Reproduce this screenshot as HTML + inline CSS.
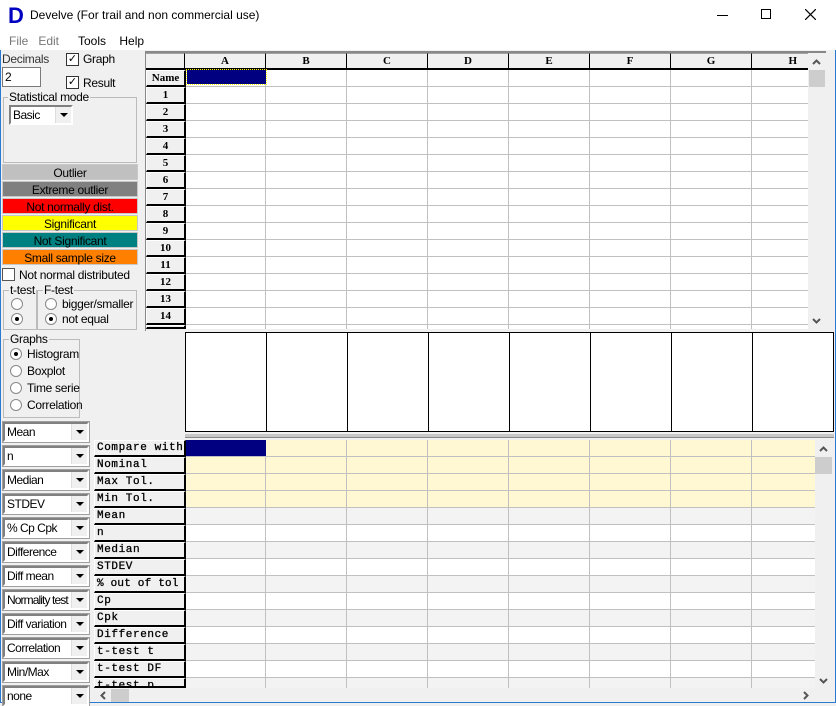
<!DOCTYPE html>
<html><head><meta charset="utf-8">
<style>
*{box-sizing:border-box;margin:0;padding:0}
body{width:836px;height:703px;overflow:hidden;background:#f0f0f0;font-family:"Liberation Sans",sans-serif;font-size:12px;color:#000;position:relative}
.a{position:absolute}
.win{left:0;top:0;width:836px;height:703px;border:1px solid #2b79d0;border-top:none}
.title{left:0;top:0;width:836px;height:32px;background:#fff}
.menu{left:0;top:32px;width:836px;height:18px;background:#fff}
.hdr{background:#f0f0f0;border-right:1px solid #000;border-bottom:2px solid #000;text-align:center;font-family:"Liberation Serif",serif;font-weight:bold;font-size:11px;line-height:15px;height:17px;border-top:1px solid #a0a0a0}
.rh{background:#f0f0f0;border-right:2px solid #000;border-bottom:2px solid #000;border-left:1px solid #fff;border-top:1px solid #fff;text-align:center;font-family:"Liberation Serif",serif;font-weight:bold;font-size:11px;line-height:15px;height:17px}
.brh{text-align:left;padding-left:2px;font-family:"Liberation Mono",monospace;font-weight:normal;letter-spacing:0.6px;line-height:14px;font-size:11px;-webkit-text-stroke:0.3px #000}
.leg{left:2px;width:136px;height:16px;text-align:center;line-height:16px;font-size:12px;border:1px solid #c8c8c8;letter-spacing:-0.3px}
.dd{left:3px;width:86px;height:20px;border:2px solid;border-color:#808080 #fff #fff #808080;background:#fff;font-size:12px;line-height:16px;padding-left:2px;outline:1px solid #a0a0a0;letter-spacing:-0.5px;white-space:nowrap;overflow:hidden}
.dd i{position:absolute;right:0;top:0;width:16px;height:16px;background:#f0f0f0;border-left:1px solid #ddd}
.dd i:after{content:"";position:absolute;left:4px;top:6px;border:4px solid transparent;border-top:4px solid #000;border-bottom:none}
.rb{width:12px;height:12px;border-radius:50%;border:1px solid #888;background:#fff}
.rb.on:after{content:"";position:absolute;left:3px;top:3px;width:4px;height:4px;border-radius:50%;background:#000}
.cb{width:13px;height:13px;border:1px solid #333;background:#fff}
.grp{border:1px solid #bbb}
.lbl{background:#f0f0f0;padding:0 1px;line-height:12px;letter-spacing:-0.3px}
.t{letter-spacing:-0.3px}
</style></head><body>
<div class="a win"></div>
<div class="a title"></div>
<div class="a" style="left:8px;top:6px;width:18px;height:20px;font:bold 22px 'Liberation Sans',sans-serif;color:#0000c0;line-height:20px">D</div>
<div class="a" style="left:30px;top:8px;font-size:12px">Develve (For trail and non commercial use)</div>
<div class="a" style="left:717px;top:15px;width:11px;height:1px;background:#000"></div>
<div class="a" style="left:761px;top:9px;width:10px;height:10px;border:1px solid #000"></div>
<svg class="a" style="left:805px;top:9px" width="11" height="11"><path d="M0 0L11 11M11 0L0 11" stroke="#000" stroke-width="1.2"/></svg>
<div class="a menu"></div>
<div class="a" style="left:9px;top:34px;color:#777">File&nbsp;&nbsp; Edit</div>
<div class="a" style="left:78px;top:34px">Tools&nbsp;&nbsp;&nbsp; Help</div>

<div class="a t" style="left:2px;top:52px;color:#333">Decimals</div>
<div class="a" style="left:2px;top:67px;width:39px;height:20px;background:#fff;border:1px solid #7a7a7a;padding-left:2px;line-height:18px">2</div>
<div class="a cb" style="left:66px;top:53px;font-size:11px;line-height:11px;text-align:center">✓</div>
<div class="a t" style="left:83px;top:52px">Graph</div>
<div class="a cb" style="left:66px;top:76px;font-size:11px;line-height:11px;text-align:center">✓</div>
<div class="a t" style="left:83px;top:76px">Result</div>
<div class="a grp" style="left:3px;top:97px;width:134px;height:66px"></div>
<div class="a lbl" style="left:8px;top:91px">Statistical mode</div>
<div class="a dd" style="left:9px;top:105px;width:64px;outline:none">Basic<i></i></div>

<div class="a leg" style="top:164px;background:#c0c0c0">Outlier</div>
<div class="a leg" style="top:181px;background:#808080">Extreme outlier</div>
<div class="a leg" style="top:198px;background:#ff0000">Not normally dist.</div>
<div class="a leg" style="top:215px;background:#ffff00">Significant</div>
<div class="a leg" style="top:232px;background:#008080">Not Significant</div>
<div class="a leg" style="top:249px;background:#ff8000">Small sample size</div>

<div class="a cb" style="left:2px;top:268px;border-color:#555"></div>
<div class="a t" style="left:19px;top:268px">Not normal distributed</div>
<div class="a grp" style="left:3px;top:290px;width:34px;height:40px"></div>
<div class="a grp" style="left:37px;top:290px;width:100px;height:40px"></div>
<div class="a lbl" style="left:9px;top:284px">t-test</div>
<div class="a lbl" style="left:43px;top:284px">F-test</div>
<div class="a rb" style="left:11px;top:298px"></div>
<div class="a rb on" style="left:11px;top:313px"></div>
<div class="a rb" style="left:45px;top:298px"></div>
<div class="a rb on" style="left:45px;top:313px"></div>
<div class="a t" style="left:62px;top:297px">bigger/smaller</div>
<div class="a t" style="left:62px;top:312px">not equal</div>

<div class="a grp" style="left:3px;top:339px;width:77px;height:79px"></div>
<div class="a lbl" style="left:9px;top:333px">Graphs</div>
<div class="a rb on" style="left:10px;top:348px"></div><div class="a t" style="left:27px;top:347px">Histogram</div>
<div class="a rb" style="left:10px;top:365px"></div><div class="a t" style="left:27px;top:364px">Boxplot</div>
<div class="a rb" style="left:10px;top:382px"></div><div class="a t" style="left:27px;top:381px">Time serie</div>
<div class="a rb" style="left:10px;top:399px"></div><div class="a t" style="left:27px;top:398px">Correlation</div>

<div class="a dd" style="top:422px">Mean<i></i></div>
<div class="a dd" style="top:446px">n<i></i></div>
<div class="a dd" style="top:470px">Median<i></i></div>
<div class="a dd" style="top:494px">STDEV<i></i></div>
<div class="a dd" style="top:518px">% Cp Cpk<i></i></div>
<div class="a dd" style="top:542px">Difference<i></i></div>
<div class="a dd" style="top:566px">Diff mean<i></i></div>
<div class="a dd" style="top:590px;letter-spacing:-0.9px">Normality test<i></i></div>
<div class="a dd" style="top:614px">Diff variation<i></i></div>
<div class="a dd" style="top:638px">Correlation<i></i></div>
<div class="a dd" style="top:662px">Min/Max<i></i></div>
<div class="a dd" style="top:686px">none<i></i></div>

<div class="a" style="left:145px;top:51px;width:681px;height:280px;border-left:1px solid #888;border-top:2px solid #888"></div>
<div class="a" style="left:185px;top:70px;width:623px;height:259px;background:#fff;background-image:repeating-linear-gradient(90deg,transparent 0 80px,#c0c0c0 80px 81px),repeating-linear-gradient(180deg,transparent 0 16px,#c0c0c0 16px 17px)"></div>
<div class="a hdr" style="left:146px;top:53px;width:39px"></div>
<div class="a hdr" style="left:185px;top:53px;width:81px">A</div>
<div class="a hdr" style="left:266px;top:53px;width:81px">B</div>
<div class="a hdr" style="left:347px;top:53px;width:81px">C</div>
<div class="a hdr" style="left:428px;top:53px;width:81px">D</div>
<div class="a hdr" style="left:509px;top:53px;width:81px">E</div>
<div class="a hdr" style="left:590px;top:53px;width:81px">F</div>
<div class="a hdr" style="left:671px;top:53px;width:81px">G</div>
<div class="a hdr" style="left:752px;top:53px;width:56px;border-right:none;text-align:right;padding-right:11px">H</div>
<div class="a" style="left:187px;top:70px;width:79px;height:14px;background:#000080;outline:1px dotted #ff0"></div>
<div class="a rh" style="left:146px;top:70px;width:40px">Name</div>
<div class="a rh" style="left:146px;top:87px;width:40px">1</div>
<div class="a rh" style="left:146px;top:104px;width:40px">2</div>
<div class="a rh" style="left:146px;top:121px;width:40px">3</div>
<div class="a rh" style="left:146px;top:138px;width:40px">4</div>
<div class="a rh" style="left:146px;top:155px;width:40px">5</div>
<div class="a rh" style="left:146px;top:172px;width:40px">6</div>
<div class="a rh" style="left:146px;top:189px;width:40px">7</div>
<div class="a rh" style="left:146px;top:206px;width:40px">8</div>
<div class="a rh" style="left:146px;top:223px;width:40px">9</div>
<div class="a rh" style="left:146px;top:240px;width:40px">10</div>
<div class="a rh" style="left:146px;top:257px;width:40px">11</div>
<div class="a rh" style="left:146px;top:274px;width:40px">12</div>
<div class="a rh" style="left:146px;top:291px;width:40px">13</div>
<div class="a rh" style="left:146px;top:308px;width:40px">14</div>
<div class="a rh" style="left:146px;top:325px;width:40px;height:4px"></div>
<div class="a" style="left:808px;top:53px;width:18px;height:277px;background:#f0f0f0"></div>
<svg class="a" style="left:812px;top:59px" width="9" height="6"><path d="M1 5L4.5 1.5L8 5" stroke="#555" stroke-width="2" fill="none"/></svg>
<div class="a" style="left:809px;top:70px;width:16px;height:17px;background:#cdcdcd"></div>
<svg class="a" style="left:812px;top:318px" width="9" height="6"><path d="M1 1L4.5 4.5L8 1" stroke="#555" stroke-width="2" fill="none"/></svg>

<div class="a" style="left:185px;top:332px;width:649px;height:100px;background:#fff;border:1px solid #000;background-image:repeating-linear-gradient(90deg,transparent 0 80px,#000 80px 81px)"></div>
<div class="a" style="left:185px;top:434px;width:649px;height:4px;background:#c8c8c8;border-bottom:1px solid #888"></div>

<div class="a" style="left:185px;top:440px;width:630px;height:248px;background:#fff"></div>
<div class="a" style="left:185px;top:440px;width:630px;height:67px;background:#fff8d2"></div>
<div class="a" style="left:185px;top:508px;width:630px;height:16px;background:#f3f3f3"></div>
<div class="a" style="left:185px;top:542px;width:630px;height:16px;background:#f3f3f3"></div>
<div class="a" style="left:185px;top:576px;width:630px;height:16px;background:#f3f3f3"></div>
<div class="a" style="left:185px;top:610px;width:630px;height:16px;background:#f3f3f3"></div>
<div class="a" style="left:185px;top:644px;width:630px;height:16px;background:#f3f3f3"></div>
<div class="a" style="left:185px;top:678px;width:630px;height:10px;background:#f3f3f3"></div>
<div class="a" style="left:185px;top:440px;width:630px;height:248px;background-image:repeating-linear-gradient(90deg,transparent 0 80px,#c0c0c0 80px 81px),repeating-linear-gradient(180deg,transparent 0 16px,#c0c0c0 16px 17px)"></div>
<div class="a" style="left:185px;top:440px;width:81px;height:16px;background:#000080"></div>
<div class="a rh brh" style="left:94px;top:440px;width:92px">Compare with</div>
<div class="a rh brh" style="left:94px;top:457px;width:92px">Nominal</div>
<div class="a rh brh" style="left:94px;top:474px;width:92px">Max Tol.</div>
<div class="a rh brh" style="left:94px;top:491px;width:92px">Min Tol.</div>
<div class="a rh brh" style="left:94px;top:508px;width:92px">Mean</div>
<div class="a rh brh" style="left:94px;top:525px;width:92px">n</div>
<div class="a rh brh" style="left:94px;top:542px;width:92px">Median</div>
<div class="a rh brh" style="left:94px;top:559px;width:92px">STDEV</div>
<div class="a rh brh" style="left:94px;top:576px;width:92px;letter-spacing:0.2px">% out of tol</div>
<div class="a rh brh" style="left:94px;top:593px;width:92px">Cp</div>
<div class="a rh brh" style="left:94px;top:610px;width:92px">Cpk</div>
<div class="a rh brh" style="left:94px;top:627px;width:92px">Difference</div>
<div class="a rh brh" style="left:94px;top:644px;width:92px">t-test t</div>
<div class="a rh brh" style="left:94px;top:661px;width:92px">t-test DF</div>
<div class="a rh brh" style="left:94px;top:678px;width:92px;height:10px;overflow:hidden">t-test p</div>
<div class="a" style="left:815px;top:440px;width:18px;height:248px;background:#f0f0f0"></div>
<svg class="a" style="left:819px;top:446px" width="9" height="6"><path d="M1 5L4.5 1.5L8 5" stroke="#555" stroke-width="2" fill="none"/></svg>
<div class="a" style="left:815px;top:457px;width:17px;height:17px;background:#cdcdcd"></div>
<svg class="a" style="left:819px;top:678px" width="9" height="6"><path d="M1 1L4.5 4.5L8 1" stroke="#555" stroke-width="2" fill="none"/></svg>
<div class="a" style="left:94px;top:688px;width:740px;height:14px;background:#f0f0f0"></div>
<svg class="a" style="left:100px;top:691px" width="6" height="9"><path d="M5 1L1.5 4.5L5 8" stroke="#555" stroke-width="2" fill="none"/></svg>
<div class="a" style="left:111px;top:689px;width:18px;height:13px;background:#cdcdcd"></div>
<svg class="a" style="left:803px;top:691px" width="6" height="9"><path d="M1 1L4.5 4.5L1 8" stroke="#555" stroke-width="2" fill="none"/></svg>
</body></html>
